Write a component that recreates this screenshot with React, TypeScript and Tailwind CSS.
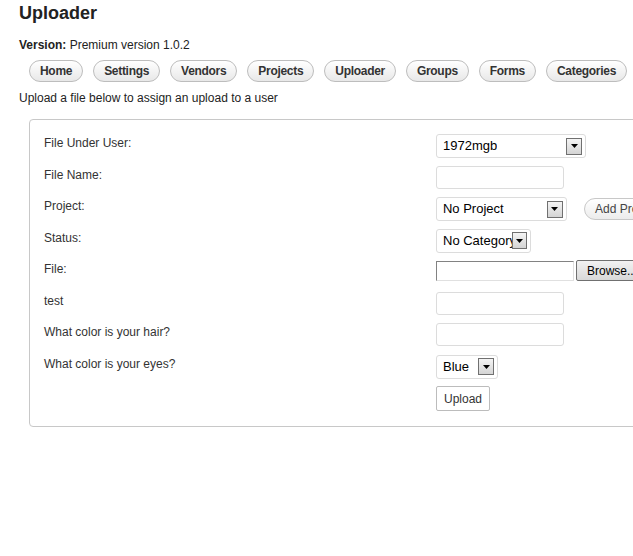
import React from "react";

const Arrow = () => (
  <span className="flex h-[17px] w-[16px] items-center justify-center border border-[#707070] bg-gradient-to-b from-[#f4f4f4] to-[#d4d4d4]">
    <svg width="7" height="4" viewBox="0 0 7 4"><path d="M0 0h7L3.5 4z" fill="#000" /></svg>
  </span>
);

const Select = ({ text, w }: { text: string; w: string }) => (
  <div className={`flex h-[24px] items-center justify-between rounded-[3px] border border-[#dcdcdc] bg-white pl-[6px] pr-[3px] text-[13px] text-black ${w}`}>
    <span className="whitespace-nowrap overflow-hidden">{text}</span>
    <Arrow />
  </div>
);

const Input = () => <div className="h-[23px] w-[128px] rounded-[3px] border border-[#dcdcdc] bg-white" />;

export default function App() {
  const nav = ["Home", "Settings", "Vendors", "Projects", "Uploader", "Groups", "Forms", "Categories"];
  const rows: [string, React.ReactNode][] = [
    ["File Under User:", <Select text="1972mgb" w="w-[150px]" />],
    ["File Name:", <Input />],
    ["Project:", (
      <div className="flex items-center gap-[17px]">
        <Select text="No Project" w="w-[131px]" />
        <div className="flex h-[22px] items-center whitespace-nowrap rounded-full border border-[#c8c8c8] bg-gradient-to-b from-white to-[#ececec] px-[10px] text-[12px] text-[#444]">Add Project</div>
      </div>
    )],
    ["Status:", <Select text="No Category" w="w-[95px]" />],
    ["File:", (
      <div className="flex items-center gap-[2px]">
        <div className="h-[20px] w-[138px] border border-[#828282] border-r-[#e0e0e0] border-b-[#e0e0e0] bg-white" />
        <div className="flex h-[21px] items-center whitespace-nowrap rounded-[2px] border border-[#707070] bg-gradient-to-b from-[#f2f2f2] to-[#d8d8d8] px-[10px] text-[12px] text-black">Browse...</div>
      </div>
    )],
    ["test", <Input />],
    ["What color is your hair?", <Input />],
    ["What color is your eyes?", <Select text="Blue" w="w-[62px]" />],
  ];
  return (
    <div className="h-[556px] w-[633px] overflow-hidden bg-white pl-[19px] text-[#333]" style={{ fontFamily: '"Liberation Sans", Arial, sans-serif' }}>
      <h1 className="pt-[3px] text-[18px] font-bold leading-[20px] text-[#222]">Uploader</h1>
      <div className="mt-[15px] text-[12px] leading-[14px] text-[#222]"><b>Version:</b> Premium version 1.0.2</div>
      <div className="mt-[8px] flex gap-[10px] pl-[10px] whitespace-nowrap">
        {nav.map((n) => (
          <div key={n} className="flex h-[22px] shrink-0 items-center rounded-full border border-[#bdbdbd] bg-gradient-to-b from-white to-[#e8e8e8] px-[10px] text-[12px] font-bold tracking-[-0.3px] text-[#333]">{n}</div>
        ))}
      </div>
      <div className="mt-[9px] text-[12px] leading-[14px] text-[#222]">Upload a file below to assign an upload to a user</div>
      <div className="ml-[10px] mt-[14px] w-[640px] rounded-[4px] border border-[#c8c8c8] pb-[15px] pl-[14px] pt-[11px]">
        {rows.map(([l, c], i) => (
          <div key={i} className="flex h-[31.5px] items-start">
            <div className="w-[392px] pt-[3px] text-[12px] text-[#333]">{l}</div>
            <div className="pt-[3px]">{c}</div>
          </div>
        ))}
        <div className="pl-[392px] pt-[3px]">
          <div className="flex h-[25px] w-[54px] items-center justify-center rounded-[2px] border border-[#bcbcbc] bg-white text-[12px] text-[#333]">Upload</div>
        </div>
      </div>
    </div>
  );
}
